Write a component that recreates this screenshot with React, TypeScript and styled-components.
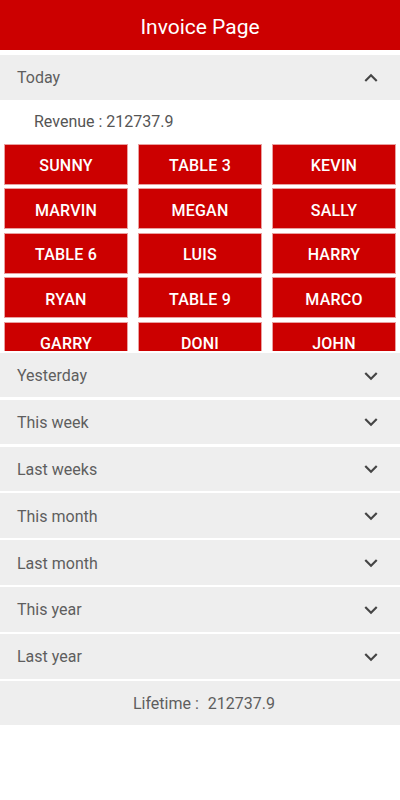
import React from "react";
import styled, { createGlobalStyle } from "styled-components";

const GlobalStyle = createGlobalStyle`
  html, body {
    margin: 0;
    padding: 0;
    background: #ffffff;
    font-family: Roboto, "Noto Sans", "Liberation Sans", sans-serif;
  }
  * { box-sizing: border-box; }
`;

const RED = "#cc0000";

const Page = styled.div`
  width: 400px;
  height: 800px;
  display: flex;
  flex-direction: column;
  background: #ffffff;
  overflow: hidden;
`;

const TitleBar = styled.header`
  height: 50px;
  flex-shrink: 0;
  background: ${RED};
  color: #ffffff;
  display: flex;
  align-items: center;
  justify-content: center;
  padding-top: 3px;
  font-size: 21px;
  font-weight: 400;
  margin-bottom: 5px;
`;

const List = styled.div`
  display: flex;
  flex-direction: column;
  gap: 2.36px;
`;

const Section = styled.section`
  display: flex;
  flex-direction: column;
`;

const SectionHeader = styled.div`
  height: 44.5px;
  flex-shrink: 0;
  background: #eeeeee;
  display: flex;
  align-items: center;
  justify-content: space-between;
  padding: 1px 16px 0 17px;
  color: #5e5e5e;
  font-size: 16px;
`;

const Body = styled.div`
  background: #ffffff;
  height: 251px;
  overflow: hidden;
`;

const Revenue = styled.div`
  height: 44px;
  display: flex;
  align-items: center;
  padding-left: 34px;
  color: #555555;
  font-size: 16px;
`;

const Grid = styled.div`
  display: grid;
  grid-template-columns: repeat(3, 1fr);
  column-gap: 10px;
  row-gap: 3.5px;
  padding: 0 4px;
`;

const TableButton = styled.button`
  height: 41px;
  background: ${RED};
  border: 1px solid #e9a0a0;
  color: #ffffff;
  font-family: Roboto, "Noto Sans", "Liberation Sans", sans-serif;
  font-size: 16px;
  font-weight: 500;
  letter-spacing: 0.2px;
  text-transform: uppercase;
  padding: 3px 0 0;
  display: flex;
  align-items: center;
  justify-content: center;
`;

const Lifetime = styled.div`
  height: 44.5px;
  background: #eeeeee;
  display: flex;
  align-items: center;
  justify-content: center;
  padding-left: 8px;
  color: #5e5e5e;
  font-size: 16px;
  gap: 9px;
`;

const Chevron = ({ up }: { up?: boolean }) => (
  <svg width="26" height="26" viewBox="0 0 24 24" fill="#454545">
    {up ? (
      <path d="M12 8l-6 6 1.41 1.41L12 10.83l4.59 4.58L18 14z" />
    ) : (
      <path d="M16.59 8.59L12 13.17 7.41 8.59 6 10l6 6 6-6z" />
    )}
  </svg>
);

const tables = [
  "Sunny", "Table 3", "Kevin",
  "Marvin", "Megan", "Sally",
  "Table 6", "Luis", "Harry",
  "Ryan", "Table 9", "Marco",
  "Garry", "Doni", "John",
];

const periods = [
  "Yesterday",
  "This week",
  "Last weeks",
  "This month",
  "Last month",
  "This year",
  "Last year",
];

export default function App() {
  return (
    <Page>
      <GlobalStyle />
      <TitleBar>Invoice Page</TitleBar>
      <List>
        <Section>
          <SectionHeader>
            <span>Today</span>
            <Chevron up />
          </SectionHeader>
          <Body>
            <Revenue>Revenue : 212737.9</Revenue>
            <Grid>
              {tables.map((t) => (
                <TableButton key={t}>{t}</TableButton>
              ))}
            </Grid>
          </Body>
        </Section>
        {periods.map((p) => (
          <Section key={p}>
            <SectionHeader>
              <span>{p}</span>
              <Chevron />
            </SectionHeader>
          </Section>
        ))}
        <Lifetime>
          <span>Lifetime :</span>
          <span>212737.9</span>
        </Lifetime>
      </List>
    </Page>
  );
}
